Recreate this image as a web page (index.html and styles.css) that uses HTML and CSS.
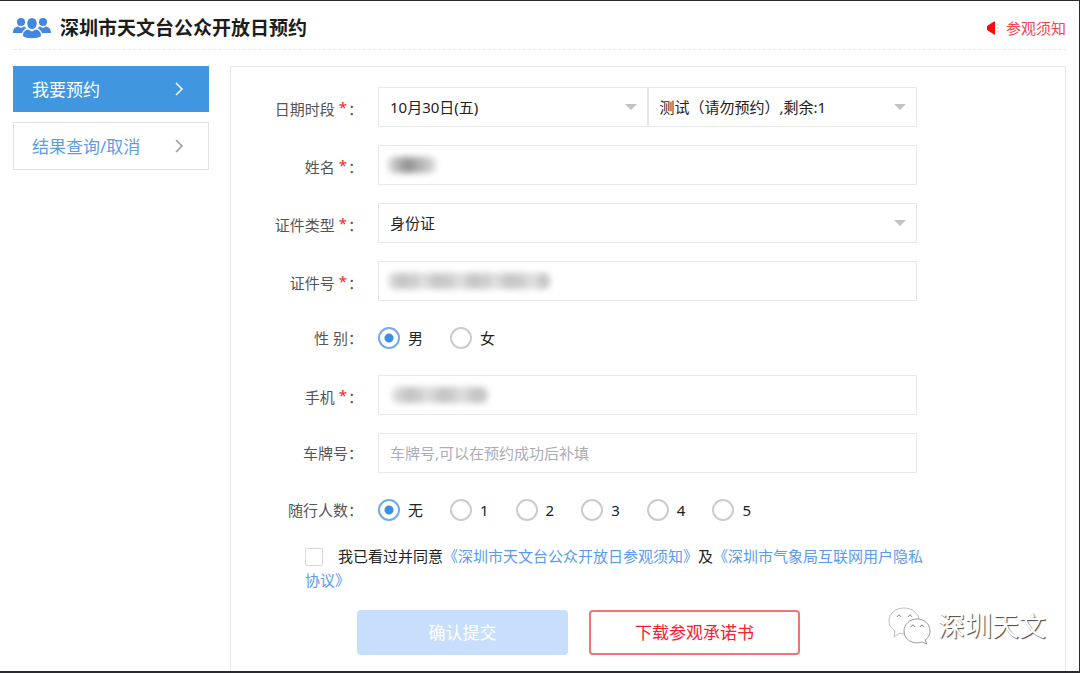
FILE: index.html
```html
<!DOCTYPE html>
<html lang="zh-CN">
<head>
<meta charset="utf-8">
<title>深圳市天文台公众开放日预约</title>
<link rel="stylesheet" href="styles.css">
</head>
<body>
<div class="page">
  <header class="header">
    <svg class="logo" viewBox="0 0 38 22" aria-hidden="true">
      <circle cx="8" cy="5" r="4"/>
      <circle cx="30" cy="5" r="4"/>
      <path d="M0 16c0-4 2-6 5-6.500l3 1.500 3-1.500c1 0 2 1 2 2-2 1-3 2.500-4 4.500z"/>
      <path d="M38 16c0-4-2-6-5-6.500l-3 1.500-3-1.500c-1 0-2 1-2 2 2 1 3 2.500 4 4.500z"/>
      <ellipse cx="19" cy="6.500" rx="4.700" ry="5.500"/>
      <path d="M10 19c0-4 2-6 5-6.500l4 2 4-2c3 .5 5 2.500 5 6.500-3 3-15 3-18 0z"/>
    </svg>
    <h1 class="title">深圳市天文台公众开放日预约</h1>
    <a class="notice" href="#notice">
      <svg class="horn" viewBox="0 0 12 14" aria-hidden="true">
        <path class="horn-body" d="M0 5l7-4.500q1-.5 1 .5v12q0 1-1 .5L0 9z"/>
        <path class="horn-wave" d="M9.500 4.500l2-1.500M9.500 7h2.500M9.500 9.500l2 1.500"/>
      </svg>
      参观须知
    </a>
  </header>

  <div class="body">
    <nav class="nav">
      <a class="nav-item nav-active" href="#book">我要预约
        <svg class="chevron" viewBox="0 0 10 14" aria-hidden="true"><path d="M2 1l6 6-6 6"/></svg></a>
      <a class="nav-item" href="#query">结果查询/取消
        <svg class="chevron" viewBox="0 0 10 14" aria-hidden="true"><path d="M2 1l6 6-6 6"/></svg></a>
    </nav>

    <main class="panel">
      <form class="form">
        <div class="row">
          <label class="label required" for="date">日期时段<span class="star">*</span>：</label>
          <div class="field pair">
            <div class="select"><select class="control" id="date"><option>10月30日(五)</option></select></div>
            <div class="select"><select class="control" aria-label="时段"><option>测试（请勿预约）,剩余:1</option></select></div>
          </div>
        </div>
        <div class="row">
          <label class="label required" for="name">姓名<span class="star">*</span>：</label>
          <div class="field"><input class="control" id="name" type="text"><span class="mask mask-name"></span></div>
        </div>
        <div class="row">
          <label class="label required" for="idtype">证件类型<span class="star">*</span>：</label>
          <div class="field select"><select class="control" id="idtype"><option>身份证</option></select></div>
        </div>
        <div class="row">
          <label class="label required" for="idno">证件号<span class="star">*</span>：</label>
          <div class="field"><input class="control" id="idno" type="text"><span class="mask mask-id"></span></div>
        </div>
        <div class="row row-radio" role="radiogroup" aria-labelledby="sex">
          <span class="label" id="sex">性 别：</span>
          <div class="field radios">
            <label class="choice"><input class="radio" type="radio" name="sex" checked>男</label>
            <label class="choice"><input class="radio" type="radio" name="sex">女</label>
          </div>
        </div>
        <div class="row">
          <label class="label required" for="phone">手机<span class="star">*</span>：</label>
          <div class="field"><input class="control" id="phone" type="text"><span class="mask mask-phone"></span></div>
        </div>
        <div class="row">
          <label class="label" for="plate">车牌号：</label>
          <div class="field"><input class="control" id="plate" type="text" placeholder="车牌号,可以在预约成功后补填"></div>
        </div>
        <div class="row row-radio" role="radiogroup" aria-labelledby="party">
          <span class="label" id="party">随行人数：</span>
          <div class="field radios">
            <label class="choice"><input class="radio" type="radio" name="party" checked>无</label>
            <label class="choice"><input class="radio" type="radio" name="party">1</label>
            <label class="choice"><input class="radio" type="radio" name="party">2</label>
            <label class="choice"><input class="radio" type="radio" name="party">3</label>
            <label class="choice"><input class="radio" type="radio" name="party">4</label>
            <label class="choice"><input class="radio" type="radio" name="party">5</label>
          </div>
        </div>
        <div class="agree">
          <input class="check" id="agree" type="checkbox"><label for="agree">我已看过并同意</label><a class="link" href="#notice">《深圳市天文台公众开放日参观须知》</a>及<a class="link" href="#privacy">《深圳市气象局互联网用户隐私协议》</a>
        </div>
        <div class="actions">
          <button class="btn btn-submit" type="submit" disabled>确认提交</button>
          <button class="btn btn-download" type="button">下载参观承诺书</button>
        </div>
      </form>
    </main>
  </div>

  <div class="watermark">
    <svg class="wechat" viewBox="0 0 44 40" aria-hidden="true">
      <path class="bubble" d="M18 28c-2 0-4 0-6-1l-6 4 1-6C3 22 1 19 1 15 1 7 8 2 16 2s14 5 15 11"/>
      <path class="bubble bubble-front" d="M42 25c0 4-2 7-5 9l2 4-5-2c-9 3-18-2-18-11 0-7 6-12 13-12s13 5 13 12z"/>
      <path class="eye" d="M9 11q2-4 4 0M20 11q2-4 4 0M23 21q2-4 4 0M32 21q2-4 4 0"/>
    </svg>
    <span>深圳天文</span>
  </div>
</div>
</body>
</html>
```
FILE: styles.css
```css
* { box-sizing: border-box; }

body {
  margin: 0;
  background: #fff;
  color: #222;
  font: 15px/24px "Noto Sans", "Noto Sans CJK SC", sans-serif;
}

a { text-decoration: none; }

.page {
  position: relative;
  display: flex;
  flex-direction: column;
  min-height: 100vh;
  padding: 0 13px;
  border: solid #2b2b2f;
  border-width: 1px 1px 2px 0;
}

.header {
  display: flex;
  align-items: center;
  gap: 9px;
  height: 49px;
  padding-top: 5px;
  border-bottom: 1px dashed #e8e8e8;
}

.logo { width: 38px; height: 22px; fill: #4187e0; }

.title {
  flex: 1;
  margin: 0;
  font-size: 19px;
  line-height: 28px;
  font-weight: 700;
  color: #1c1c1c;
}

.notice {
  display: flex;
  align-items: center;
  gap: 7px;
  color: #f0484f;
}

.horn { width: 12px; height: 14px; }
.horn-body { fill: #f80b0b; }
.horn-wave { fill: none; stroke: #fbb; }

.body {
  flex: 1;
  display: flex;
  gap: 21px;
  padding-top: 16px;
}

.nav {
  display: flex;
  flex-direction: column;
  gap: 10px;
  width: 196px;
}

.nav-item {
  display: flex;
  align-items: center;
  justify-content: space-between;
  height: 48px;
  padding: 2px 24px 0 18px;
  border: 1px solid #e3e3e3;
  font-size: 17px;
  color: #5a9de4;
}

.nav-active {
  height: 46px;
  border-color: #4097e0;
  background: #4097e0;
  color: #fff;
}

.chevron {
  width: 10px;
  height: 14px;
  margin-bottom: 3px;
  fill: none;
  stroke: #999;
  stroke-width: 1.5;
}
.nav-active .chevron { stroke: #fff; }

.panel {
  flex: 1;
  border: 1px solid #e6e6e6;
  border-bottom: 0;
}

.form {
  display: flex;
  flex-direction: column;
  gap: 18px;
  padding: 20px 148px 14px 0;
}

.row { display: flex; align-items: center; }
.row-radio { height: 38px; }

.label {
  width: 147px;
  padding-right: 15px;
  text-align: right;
  white-space: nowrap;
  color: #555;
}

.required { padding-top: 3px; }

.star {
  padding: 0 1px 0 4px;
  color: #f22;
  line-height: 1;
  vertical-align: 2px;
}

.field { position: relative; flex: 1; }
.pair { display: flex; }
.pair .select { flex: 1; }

.control {
  display: block;
  width: 100%;
  height: 40px;
  padding: 0 11px;
  border: 1px solid #e8e8e8;
  border-radius: 0;
  background: #fff;
  color: #222;
  font: inherit;
  appearance: none;
}
.control::placeholder { color: #aaadb5; opacity: 1; }

.select { position: relative; }
.select::after {
  content: "";
  position: absolute;
  top: 17px;
  right: 11px;
  border: 6px solid transparent;
  border-top-color: #c2c2c2;
  border-bottom: 0;
  pointer-events: none;
}

.mask {
  position: absolute;
  top: 12px;
  left: 10px;
  height: 16px;
  border-radius: 6px;
  filter: blur(3px);
  pointer-events: none;
}
.mask-name {
  width: 48px;
  background: linear-gradient(90deg, #ddd, #909090 40%, #aaa 60%, #ddd);
}
.mask-id {
  width: 162px;
  background: repeating-linear-gradient(90deg, #e2e2e2 0, #c4c4c4 12px, #cfcfcf 28px, #e2e2e2 36px);
}
.mask-phone {
  left: 14px;
  width: 96px;
  background: repeating-linear-gradient(90deg, #e2e2e2 0, #c2c2c2 16px, #cacaca 26px, #dcdcdc 34px);
}

.radios { display: flex; gap: 27px; }
.choice { display: flex; align-items: center; gap: 8px; }

.radio {
  width: 22px;
  height: 22px;
  margin: 0;
  border: 2px solid #ccc;
  border-radius: 50%;
  background: #fff;
  appearance: none;
}
.radio:checked {
  border-color: #75a9e8;
  background: radial-gradient(circle, #3c90e0 4px, #fff 5px);
}

.agree {
  margin: -3px -10px 0 74px;
}

.check {
  width: 18px;
  height: 18px;
  margin: 0 15px 0 0;
  border: 1px solid #d8d8d8;
  border-radius: 2px;
  background: #fff;
  vertical-align: -4px;
  appearance: none;
}
.check:checked { background: #4097e0; }

.link { color: #589bf0; }

.actions {
  display: flex;
  gap: 21px;
  padding-left: 126px;
}

.btn {
  width: 211px;
  height: 45px;
  border: 0;
  border-radius: 4px;
  font: inherit;
  font-size: 17px;
}
.btn-submit { background: #c7defc; color: #fff; }
.btn-download {
  border: 2px solid #f47373;
  background: #fff;
  color: #f5222d;
}

.watermark {
  position: absolute;
  right: 33px;
  bottom: 25px;
  display: flex;
  align-items: center;
  gap: 6px;
  color: #fff;
  font-size: 27px;
  line-height: 40px;
  text-shadow: 1px 1px 1px #444;
}
.wechat { width: 44px; height: 40px; }
.bubble { fill: #fff; stroke: #bbb; }
.bubble-front { stroke: #999; }
.eye { fill: none; stroke: #888; }
```
